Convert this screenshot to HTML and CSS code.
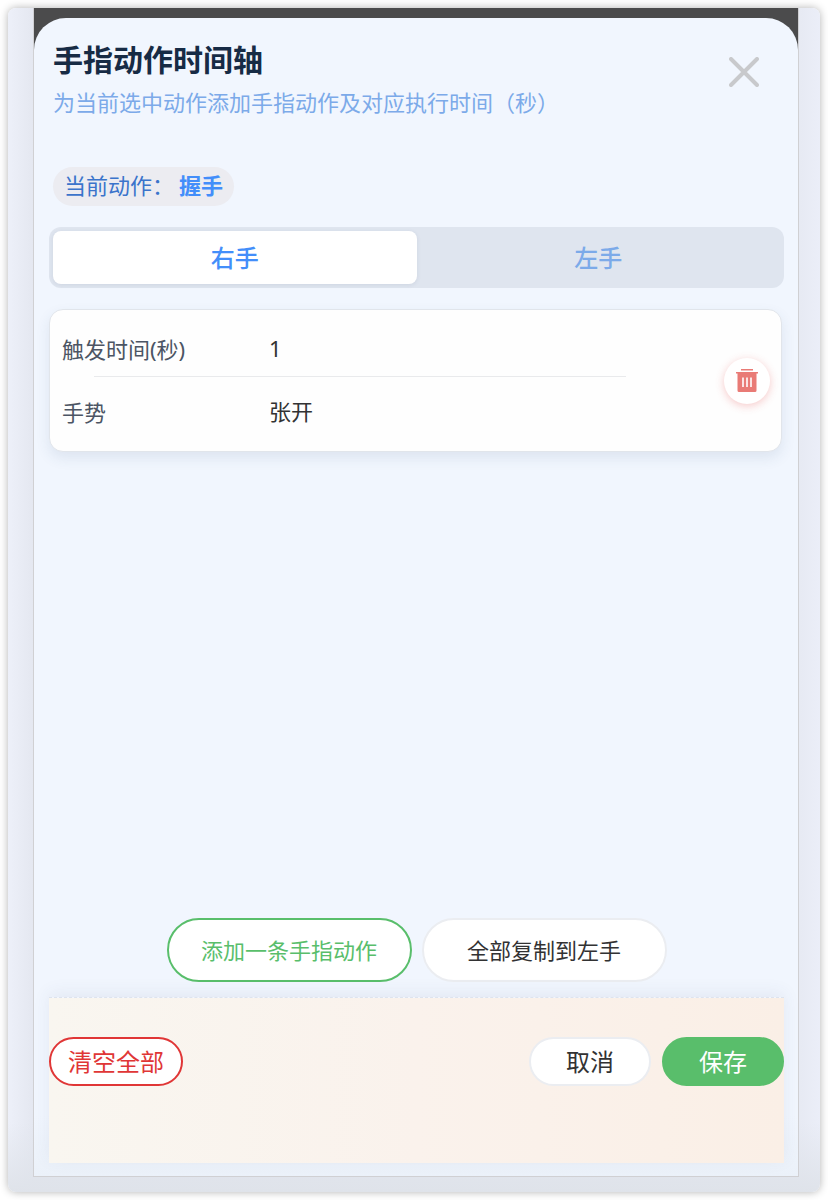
FILE: index.html
```html
<!DOCTYPE html>
<html lang="zh-CN">
<head>
  <meta charset="UTF-8">
  <meta name="viewport" content="width=device-width, initial-scale=1.0">
  <title>手指动作时间轴</title>
  <link rel="stylesheet" href="styles.css">
</head>
<body>
  <div class="shell">
    <div class="screen">
      <main class="sheet">
        <header class="sheet-header">
          <div>
            <h1>手指动作时间轴</h1>
            <p>为当前选中动作添加手指动作及对应执行时间（秒）</p>
          </div>
          <button class="close-btn" type="button" aria-label="关闭">
            <svg viewBox="0 0 30 30" width="30" height="30"><path d="M2 2 28 28M28 2 2 28"/></svg>
          </button>
        </header>

        <div class="current">当前动作：<strong>握手</strong></div>

        <div class="tabs" role="tablist">
          <button class="tab active" type="button" role="tab" aria-selected="true">右手</button>
          <button class="tab" type="button" role="tab" aria-selected="false">左手</button>
        </div>

        <section class="card">
          <div class="fields">
            <div class="field">
              <label for="time">触发时间(秒)</label>
              <input id="time" type="text" inputmode="decimal" value="1">
            </div>
            <div class="field">
              <label for="gesture">手势</label>
              <select id="gesture">
                <option selected>张开</option>
              </select>
            </div>
          </div>
          <button class="delete-btn" type="button" aria-label="删除">
            <svg viewBox="0 0 24 24" width="24" height="24">
              <path d="M6 0h12v1.600H6zM1 3h22v1.500H1z"/>
              <path fill-rule="evenodd" d="M2.500 4h19v17.500a1.500 1.500 0 0 1-1.500 1.500H4A1.500 1.500 0 0 1 2.500 21.500zM7.200 8.500v9.500h1.600V8.500zM11.200 8.500v9.500h1.600V8.500zM15.200 8.500v9.500h1.600V8.500z"/>
            </svg>
          </button>
        </section>

        <div class="actions">
          <button class="btn btn-add" type="button">添加一条手指动作</button>
          <button class="btn btn-plain" type="button">全部复制到左手</button>
        </div>

        <footer class="sheet-footer">
          <button class="btn btn-clear" type="button">清空全部</button>
          <button class="btn btn-plain" type="button">取消</button>
          <button class="btn btn-save" type="button">保存</button>
        </footer>
      </main>
    </div>
  </div>
</body>
</html>
```
FILE: styles.css
```css
* { margin: 0; padding: 0; box-sizing: border-box; }

body {
  min-height: 100vh;
  padding: 8px;
  display: flex;
  background: #fff;
  color: #323233;
  font-family: "Noto Sans", "Noto Sans CJK SC", sans-serif;
  font-size: 22px;
}

button, input, select { font: inherit; color: inherit; border: none; background: none; }
button { cursor: pointer; }

.shell {
  flex: 1;
  display: flex;
  padding: 0 21px 15px 25px;
  border-radius: 8px;
  background:
    linear-gradient(to top, #dfe3ea, rgba(223, 227, 234, 0) 70px),
    linear-gradient(to right, #edf0f9, #e4e7f0 26px, #e6e9f2 calc(100% - 24px), #ebeef8);
  box-shadow: 0 0 8px rgba(0, 0, 0, 0.3);
}

.screen {
  flex: 1;
  display: flex;
  padding-top: 10px;
  border: 1px solid #d0d0d3;
  border-top: none;
  background: #4b4b4c;
}

.sheet {
  flex: 1;
  display: flex;
  flex-direction: column;
  padding: 22px 14px 13px 15px;
  border-radius: 32px 32px 0 0;
  background: linear-gradient(to bottom, #f1f6fe calc(100% - 60px), #ebf1f9);
}

.sheet-header {
  display: flex;
  justify-content: space-between;
  align-items: flex-start;
  padding: 0 25px 0 4px;
}

.sheet-header h1 {
  font-size: 30px;
  line-height: 40px;
  font-weight: 700;
  color: #172b45;
}

.sheet-header p {
  margin-top: 6px;
  line-height: 32px;
  color: #7caae9;
}

.close-btn { margin-top: 17px; }

.close-btn svg {
  display: block;
  fill: none;
  stroke: #c8c9cc;
  stroke-width: 4;
  stroke-linecap: round;
}

.current {
  align-self: flex-start;
  margin: 49px 0 0 4px;
  padding: 0 11px 2px;
  border-radius: 20px;
  background: #ececf1;
  line-height: 37px;
  color: #3b74cb;
}

.current strong { margin-left: 5px; color: #438efa; }

.tabs {
  display: flex;
  margin-top: 21px;
  padding: 4px;
  border-radius: 12px;
  background: #dfe5ef;
}

.tab {
  flex: 1;
  height: 53px;
  padding-bottom: 2px;
  border-radius: 8px;
  font-size: 24px;
  font-weight: 500;
  color: #7caae9;
}

.tab.active {
  background: #fff;
  color: #438efa;
  box-shadow: 0 1px 4px rgba(60, 80, 120, 0.1);
}

.card {
  display: flex;
  align-items: center;
  margin: 21px 2px 0 0;
  padding: 11px 11px 11px 12px;
  border: 1px solid #e1e5eb;
  border-radius: 14px;
  background: #fefefe;
  box-shadow: 0 6px 14px rgba(50, 80, 120, 0.1);
}

.fields {
  flex: 1;
  display: grid;
  gap: 7px;
  margin-right: 65px;
}

.field {
  display: flex;
  align-items: center;
  height: 56px;
  padding-bottom: 3px;
}

/* inset hairline under the first field */
.field:first-child {
  background: linear-gradient(#e9eaec, #e9eaec) 32px 100% / calc(100% - 65px) 1px no-repeat;
}

.field label { width: 207px; color: #4c5564; }

.field input, .field select {
  flex: 1;
  min-width: 0;
  appearance: none;
}

.delete-btn {
  width: 46px;
  height: 46px;
  display: grid;
  place-items: center;
  border-radius: 50%;
  background: #fff;
  box-shadow: 0 2px 8px rgba(230, 80, 80, 0.3);
}

.delete-btn svg { fill: #e97b76; }

.actions {
  display: flex;
  justify-content: center;
  gap: 10px;
  margin-top: auto;
}

.btn {
  padding-bottom: 3px;
  border: 2px solid transparent;
  border-radius: 32px;
  background: #fff;
}

.actions .btn { width: 245px; height: 64px; }

.btn-plain { border-color: #ebedf1; }
.btn-add { border-color: #59be6b; color: #59be6b; }
.btn-clear { border-color: #e03636; color: #e03636; }
.btn-save { border-color: #59be6b; background: #59be6b; color: #fff; }

.sheet-footer {
  display: flex;
  gap: 11px;
  margin-top: 15px;
  padding: 39px 0 77px;
  border-top: 1px dashed #dde3ee;
  background: linear-gradient(to right, #f9f6f0, #faf2ec 50%, #faefe6);
  background-clip: padding-box;
  box-shadow: 0 -4px 16px rgba(60, 80, 120, 0.08);
}

.sheet-footer .btn {
  width: 122px;
  height: 49px;
  font-size: 24px;
}

.sheet-footer .btn-clear { width: 134px; margin-right: auto; }
```
